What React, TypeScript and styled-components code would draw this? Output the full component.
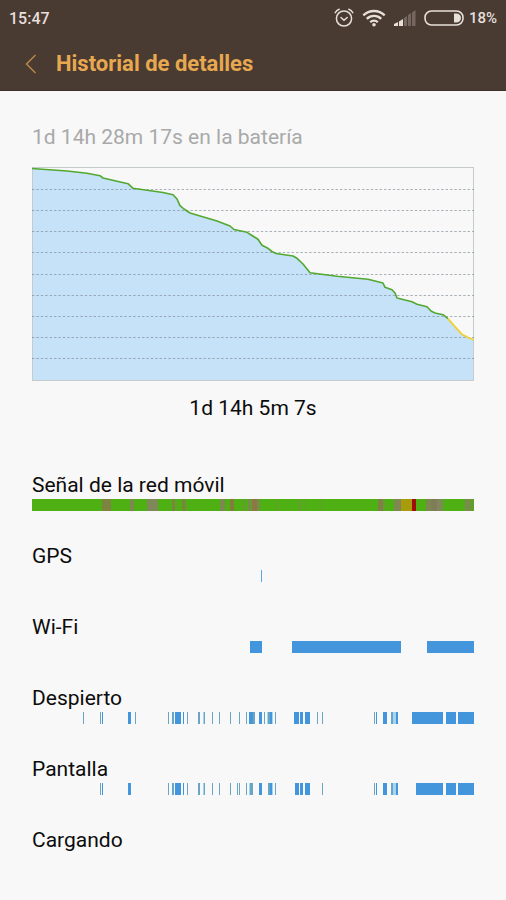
import React from "react";
import styled, { createGlobalStyle } from "styled-components";

const GlobalStyle = createGlobalStyle`
  * { box-sizing: border-box; }
  body {
    margin: 0;
    background: #f8f8f8;
    color: #0c0c0c;
    font-family: Roboto, "Liberation Sans", sans-serif;
  }
`;

const Header = styled.header`
  background: #493a32;
  box-shadow: inset 0 -1px 0 #3e312a;
`;

const StatusBar = styled.div`
  display: flex;
  align-items: center;
  justify-content: space-between;
  height: 36px;
  padding: 0 9px;
  color: #e6dfda;
  font-size: 16px;
  font-weight: 500;
`;

const StatusIcons = styled.div`
  display: flex;
  align-items: center;
  gap: 8px;
  svg { display: block; }
`;

const BatteryStatus = styled.div`
  display: flex;
  align-items: center;
  gap: 5px;
  font-size: 15px;
`;

const TitleBar = styled.div`
  display: flex;
  align-items: center;
  gap: 10px;
  height: 55px;
  padding: 0 16px;
`;

const BackButton = styled.button`
  display: flex;
  align-items: center;
  justify-content: center;
  width: 30px;
  height: 32px;
  padding: 0;
  border: 0;
  background: none;
  cursor: pointer;
`;

const Title = styled.h1`
  margin: 0;
  color: #e8a850;
  font-size: 22px;
  line-height: 28px;
  font-weight: 700;
`;

const Content = styled.main`
  padding: 32px 32px 0;
`;

const Summary = styled.p`
  margin: 0 0 16px;
  color: #a9a9a9;
  font-size: 21px;
  line-height: 28px;
`;

const Chart = styled.svg`
  display: block;
  width: 100%;
  height: 214px;
`;

const Duration = styled.p`
  margin: 13px 0 50px;
  text-align: center;
  font-size: 21px;
  line-height: 28px;
`;

const Row = styled.section`
  height: 71px;
`;

const RowLabel = styled.h2`
  margin: 0;
  font-size: 21px;
  line-height: 27px;
  font-weight: 400;
`;

const Track = styled.svg`
  display: block;
  width: 100%;
  height: 12px;
`;

const BLUE = "#4496dc";
const MID = "#6ba5c4";
const PALE = "#a5d5ee";
const GREEN = "#4eb012";

type Segment = [start: number, width: number, color: string];

const signal: Segment[] = [
  [0, 442, GREEN],
  [70, 9, "#7c8440"], [98, 4, "#7c8850"], [115, 11, "#7f8858"],
  [140, 3, "#7c8440"], [145, 1, "#6c9a30"], [150, 3, "#78853a"], [153, 2, "#5fa02a"],
  [188, 5, "#7c8850"], [198, 4, "#847c3c"], [211, 2, "#6c9638"], [216, 3, "#7c8850"],
  [220, 5, "#8c7844"], [225, 3, "#749044"], [244, 1, "#6c9638"], [267, 2, "#6f9638"], [273, 1, "#5da026"], [289, 1, "#5da026"],
  [346, 5, "#7f8048"], [351, 2, "#699a34"], [362, 7, "#7f8850"], [369, 11, "#a89c0c"],
  [380, 4, "#a00c08"], [394, 5, "#7c8850"], [399, 6, "#7f7c58"], [405, 6, "#7f8858"],
  [433, 5, "#7c8a50"], [438, 4, "#5fa02a"],
];

const gps: Segment[] = [[229, 1, "#55a9dc"]];

const wifi: Segment[] = [
  [218, 12, BLUE], [260, 109, BLUE], [395, 47, BLUE],
];

const middayBars: Segment[] = [
  [136, 1, MID], [140, 2, MID], [143, 6, BLUE], [151, 1, BLUE], [155, 1, MID],
  [166, 2, MID], [171, 1, PALE], [172, 1, MID], [180, 1, MID], [187, 1, MID], [198, 1, MID],
];

const eveningBars: Segment[] = [
  [238, 2, BLUE], [240, 1, PALE], [243, 1, MID],
  [268, 3, BLUE], [273, 5, BLUE], [290, 1, MID],
  [342, 1, MID], [344, 1, BLUE], [351, 4, BLUE],
  [359, 2, MID], [361, 3, PALE], [364, 2, BLUE],
  [414, 10, BLUE], [426, 16, BLUE],
];

const awake: Segment[] = [
  [51, 1, MID], [68, 1, MID], [70, 1, BLUE], [96, 3, BLUE], [103, 1, MID],
  ...middayBars,
  [207, 1, MID], [214, 1, MID], [217, 4, BLUE], [221, 2, MID],
  [227, 3, BLUE], [232, 1, MID], [235, 1, PALE], [236, 2, MID],
  [262, 5, BLUE], [285, 1, MID], [380, 31, BLUE],
  ...eveningBars,
];

const screen: Segment[] = [
  [68, 1, MID], [70, 1, BLUE], [96, 3, BLUE],
  ...middayBars,
  [205, 1, MID], [207, 1, MID], [214, 1, MID], [217, 1, PALE], [218, 3, MID],
  [227, 3, BLUE], [236, 2, MID],
  [263, 4, BLUE], [384, 27, BLUE],
  ...eveningBars,
];

const rows: { label: string; segments: Segment[] }[] = [
  { label: "Señal de la red móvil", segments: signal },
  { label: "GPS", segments: gps },
  { label: "Wi-Fi", segments: wifi },
  { label: "Despierto", segments: awake },
  { label: "Pantalla", segments: screen },
  { label: "Cargando", segments: [] },
];

const gridLines = [22, 43, 64, 85, 107, 128, 149, 170, 191];

const normalLevel =
  "0,1.5 35,4 55,6.3 68,8.7 71,11 96,16.7 101,21.3 131,25.5 141,27.7 145,32 148,38.7 152,42 158,46 " +
  "185,54 198,59 202,62.5 215,65.3 220,68.5 226,72.3 230,78.3 235,80.7 240,84.5 244,86.5 261,89 265,91.3 " +
  "271,97 278,105.8 305,109.3 336,112.3 351,116 353,120.3 360,122.7 363,126 365,131 380,134.7 385,137.3 " +
  "395,139.7 399,144 403,146 411,147.7 416,151.7";
const lowLevel = "416,151.7 422,158.7 430,167.3 436,170.5 442,173";

function BatteryChart() {
  return (
    <Chart viewBox="0 0 442 214" preserveAspectRatio="none" role="img" aria-label="Nivel de batería">
      <polygon points={`${normalLevel} ${lowLevel} 442,214 0,214`} fill="#c6e2f8" />
      <rect x="0.5" y="0.5" width="441" height="213" fill="none" stroke="#c6cbce" />
      {gridLines.map((y) => (
        <line key={y} x1="0" x2="442" y1={y + 0.5} y2={y + 0.5} stroke="#7c8894" strokeOpacity="0.65" strokeDasharray="2.4 2" />
      ))}
      <polyline points={normalLevel} fill="none" stroke="#52a830" strokeWidth="1.6" strokeLinejoin="round" />
      <polyline points={lowLevel} fill="none" stroke="#f0d030" strokeWidth="1.8" strokeLinejoin="round" />
    </Chart>
  );
}

function Timeline({ label, segments }: { label: string; segments: Segment[] }) {
  return (
    <Row>
      <RowLabel>{label}</RowLabel>
      <Track viewBox="0 0 442 12" preserveAspectRatio="none" aria-hidden="true">
        {segments.map(([x, width, color]) => (
          <rect key={`${x}-${width}`} x={x} y="0" width={width} height="12" fill={color} />
        ))}
      </Track>
    </Row>
  );
}

function AlarmIcon() {
  return (
    <svg width="20" height="20" viewBox="0 0 20 20" fill="none" stroke="#e6dfda" strokeWidth="1.5" strokeLinecap="round">
      <circle cx="10" cy="10.5" r="7.6" />
      <path d="M7 9.5l3 2.7 3.2-2.7M1.2 4.8C2 3 3.4 1.7 5.2 1.2M18.8 4.8C18 3 16.6 1.7 14.8 1.2" />
    </svg>
  );
}

function WifiIcon() {
  return (
    <svg width="24" height="18" viewBox="0 0 24 18" fill="none" stroke="#e6dfda" strokeWidth="2.3">
      <path d="M1.3 6.4a15.2 15.2 0 0 1 21.4 0M4.8 9.9a10.2 10.2 0 0 1 14.4 0M8.2 13.2a5.4 5.4 0 0 1 7.6 0" />
      <circle cx="12" cy="15.7" r="1.8" fill="#e6dfda" stroke="none" />
    </svg>
  );
}

function SignalIcon() {
  return (
    <svg width="22" height="16" viewBox="0 0 22 16">
      <path d="M0 16v-2l4-2v4zM5 16v-4.500l4-2.500v7z" fill="#e6dfda" />
      <path d="M10 16V8l3-2v10zM14 16V5l3-2v13zM18 16V2.500L21.500 0v16z" fill="#75675f" />
    </svg>
  );
}

function BatteryIcon() {
  return (
    <svg width="40" height="16" viewBox="0 0 40 16">
      <rect x="1" y="1" width="38" height="14" rx="6.500" fill="none" stroke="#e6dfda" strokeWidth="1.6" />
      <path d="M30 3.500h2.500a4.500 4.500 0 0 1 0 9H30z" fill="#e6dfda" />
    </svg>
  );
}

export default function App() {
  return (
    <>
      <GlobalStyle />
      <Header>
        <StatusBar>
          <span>15:47</span>
          <StatusIcons>
            <AlarmIcon />
            <WifiIcon />
            <SignalIcon />
            <BatteryStatus>
              <BatteryIcon />
              <span>18%</span>
            </BatteryStatus>
          </StatusIcons>
        </StatusBar>
        <TitleBar>
          <BackButton type="button" aria-label="Atrás">
            <svg width="12" height="20" viewBox="0 0 12 20" fill="none" stroke="#b98648" strokeWidth="1.5">
              <path d="M10.500 1L1.500 10l9 9" />
            </svg>
          </BackButton>
          <Title>Historial de detalles</Title>
        </TitleBar>
      </Header>
      <Content>
        <Summary>1d 14h 28m 17s en la batería</Summary>
        <BatteryChart />
        <Duration>1d 14h 5m 7s</Duration>
        {rows.map((row) => (
          <Timeline key={row.label} {...row} />
        ))}
      </Content>
    </>
  );
}
